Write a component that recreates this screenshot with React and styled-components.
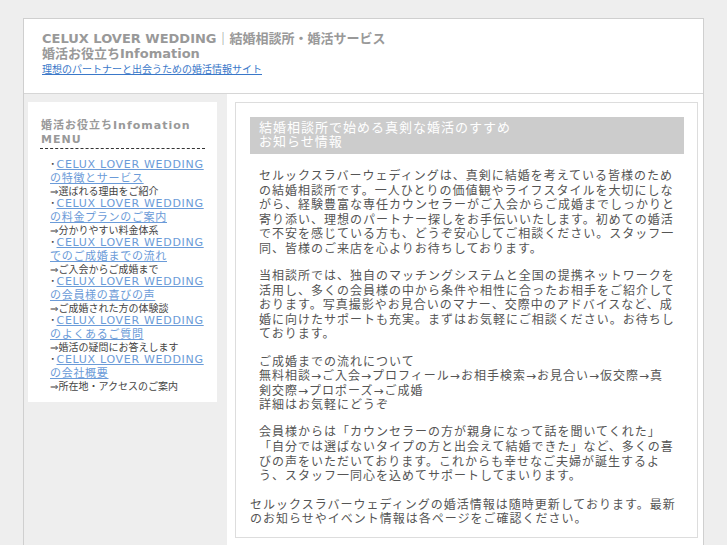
import React from "react";
import styled, { createGlobalStyle } from "styled-components";

const menuItems = [
  { title: "の特徴とサービス", desc: "選ばれる理由をご紹介" },
  { title: "の料金プランのご案内", desc: "分かりやすい料金体系" },
  { title: "でのご成婚までの流れ", desc: "ご入会からご成婚まで" },
  { title: "の会員様の喜びの声", desc: "ご成婚された方の体験談" },
  { title: "のよくあるご質問", desc: "婚活の疑問にお答えします" },
  { title: "の会社概要", desc: "所在地・アクセスのご案内" },
];

function App() {
  return (
    <>
      <GlobalStyle />
      <Wrapper>
        <Header>
          <SiteTitle>
            CELUX LOVER WEDDING｜結婚相談所・婚活サービス
            <br />
            婚活お役立ちInfomation
          </SiteTitle>
          <Tagline href="#">理想のパートナーと出会うための婚活情報サイト</Tagline>
        </Header>

        <Main>
          <Side>
            <Menu>
              <MenuTitle>婚活お役立ちInfomation MENU</MenuTitle>
              <MenuList>
                {menuItems.map((item) => (
                  <MenuItem key={item.title}>
                    <Bullet>･</Bullet>
                    <MenuLink href="#">
                      CELUX LOVER WEDDING
                      <br />
                      {item.title}
                    </MenuLink>
                    <MenuDesc>⇒{item.desc}</MenuDesc>
                  </MenuItem>
                ))}
              </MenuList>
            </Menu>
          </Side>

          <Content>
            <Article>
              <Heading>
                結婚相談所で始める真剣な婚活のすすめ
                <br />
                お知らせ情報
              </Heading>
              <Body>
                <Paragraph>
                  セルックスラバーウェディングは、真剣に結婚を考えている皆様のための結婚相談所です。一人ひとりの価値観やライフスタイルを大切にしながら、経験豊富な専任カウンセラーがご入会からご成婚までしっかりと寄り添い、理想のパートナー探しをお手伝いいたします。初めての婚活で不安を感じている方も、どうぞ安心してご相談ください。スタッフ一同、皆様のご来店を心よりお待ちしております。
                </Paragraph>
                <Paragraph>
                  当相談所では、独自のマッチングシステムと全国の提携ネットワークを活用し、多くの会員様の中から条件や相性に合ったお相手をご紹介しております。写真撮影やお見合いのマナー、交際中のアドバイスなど、成婚に向けたサポートも充実。まずはお気軽にご相談ください。お待ちしております。
                </Paragraph>
                <Paragraph>
                  ご成婚までの流れについて
                  <br />
                  無料相談→ご入会→プロフィール→お相手検索→お見合い→仮交際→真剣交際→プロポーズ→ご成婚
                  <br />
                  詳細はお気軽にどうぞ
                </Paragraph>
                <Paragraph>
                  会員様からは「カウンセラーの方が親身になって話を聞いてくれた」「自分では選ばないタイプの方と出会えて結婚できた」など、多くの喜びの声をいただいております。これからも幸せなご夫婦が誕生するよう、スタッフ一同心を込めてサポートしてまいります。
                </Paragraph>
              </Body>
              <Footnote>
                セルックスラバーウェディングの婚活情報は随時更新しております。最新のお知らせやイベント情報は各ページをご確認ください。
              </Footnote>
            </Article>
          </Content>
        </Main>
      </Wrapper>
    </>
  );
}

const GlobalStyle = createGlobalStyle`
  html, body {
    margin: 0;
    padding: 0;
  }
  body {
    background-color: #eeeeee;
    font-family: "DejaVu Sans", Verdana, "Noto Sans CJK JP", sans-serif;
    color: #555555;
  }
`;

const Wrapper = styled.div`
  width: 679px;
  margin: 18px auto 0;
  border: 1px solid #cfcfcf;
  border-bottom: none;
  background-color: #ffffff;
`;

const Header = styled.header`
  padding: 12px 18px 17px;
  border-bottom: 1px solid #d6d6d6;
`;

const SiteTitle = styled.h1`
  margin: 0;
  font-size: 13px;
  line-height: 15px;
  font-weight: bold;
  color: #999999;
`;

const Tagline = styled.a`
  display: block;
  margin-top: 3px;
  font-size: 10px;
  line-height: 12px;
  color: #3a78c9;
`;

const Main = styled.div`
  display: flex;
  align-items: stretch;
  min-height: 460px;
`;

const Side = styled.aside`
  width: 203px;
  flex-shrink: 0;
  box-sizing: border-box;
  padding: 8px 10px 0 4px;
  background-color: #eeeeee;
`;

const Menu = styled.nav`
  background-color: #ffffff;
  padding: 17px 12px 10px 12px;
`;

const MenuTitle = styled.h2`
  margin: 0;
  padding: 0 0 1px 1px;
  font-size: 11px;
  line-height: 14px;
  letter-spacing: 1px;
  font-weight: bold;
  color: #999999;
  border-bottom: 1px dashed #333333;
`;

const MenuList = styled.ul`
  list-style: none;
  margin: 0;
  padding: 9px 0 0 10px;
`;

const MenuItem = styled.li`
  font-size: 11px;
  line-height: 14px;
  color: #444444;
  white-space: nowrap;
`;

const Bullet = styled.span`
  margin-right: 1px;
  color: #444444;
`;

const MenuLink = styled.a`
  color: #6b9bd8;
  letter-spacing: 0.7px;
`;

const MenuDesc = styled.span`
  display: block;
  font-size: 10px;
  line-height: 11px;
  color: #444444;
`;

const Content = styled.div`
  flex: 1;
  padding: 8px 5px 8px 8px;
`;

const Article = styled.article`
  border: 1px solid #dddddd;
  padding: 14px 13px 10px 14px;
`;

const Heading = styled.h3`
  margin: 0;
  padding: 4px 9px 5px;
  background-color: #cccccc;
  color: #ffffff;
  font-size: 13px;
  line-height: 14px;
  font-weight: normal;
  letter-spacing: 1px;
`;

const Body = styled.div`
  margin-top: 15px;
  padding: 0 9px;
`;

const Paragraph = styled.p`
  margin: 0 0 12.5px;
  font-size: 12px;
  line-height: 14.6px;
  letter-spacing: 1px;
  color: #555555;
`;

const Footnote = styled.p`
  margin: 14px 0 0;
  font-size: 12px;
  line-height: 14.6px;
  letter-spacing: 1px;
  color: #555555;
`;

export default App;
